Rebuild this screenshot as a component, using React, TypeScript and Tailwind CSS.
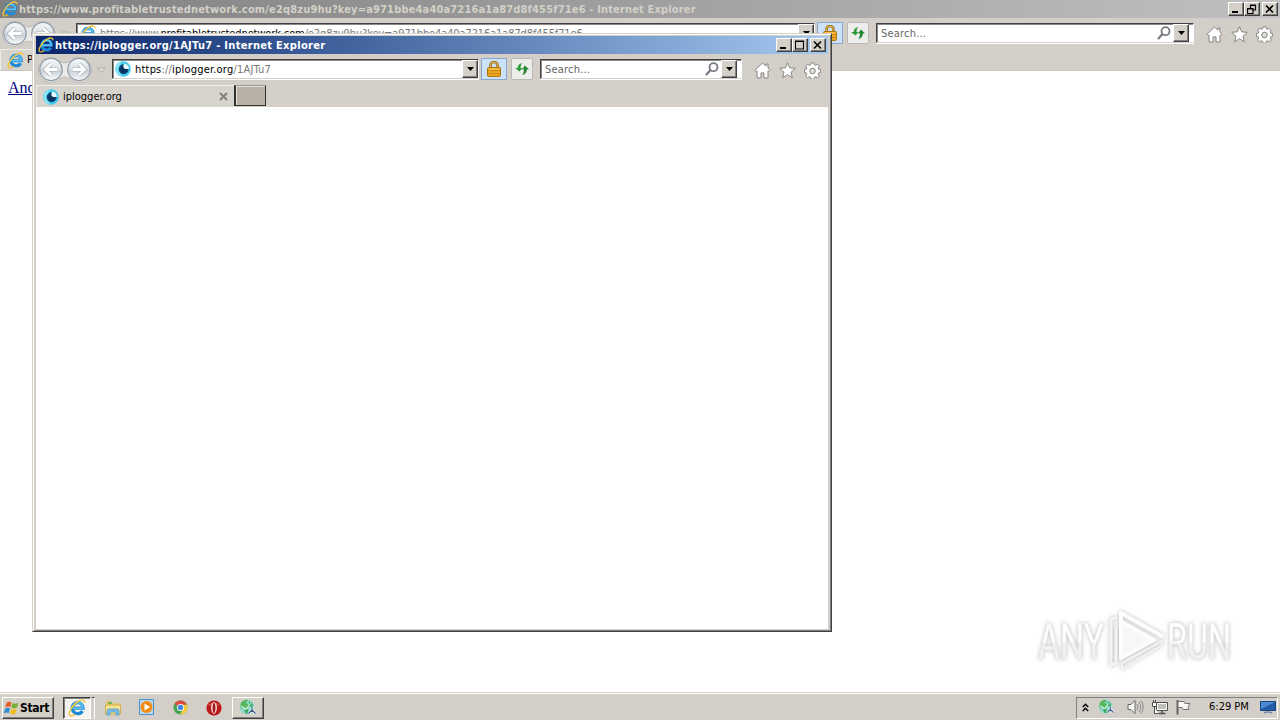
import React from "react";

const ui = "[font-family:'DejaVu_Sans_Condensed','DejaVu_Sans',sans-serif] [font-stretch:condensed]";
const raised =
  "bg-[#d4d0c8] border border-t-white border-l-white border-b-[#404040] border-r-[#404040] shadow-[inset_-1px_-1px_0_#808080]";

function IeLogo({ className = "" }: { className?: string }) {
  return (
    <svg viewBox="0 0 16 16" className={className}>
      <path d="M4.200 8.200H13.400C13.400 5 11.300 3.200 8.600 3.200A4.900 4.900 0 1 0 12.800 10.700" fill="none" stroke="#1c8ad6" strokeWidth="2.900" />
      <path d="M4.200 8.200H13.200C13.200 5 11.300 3.200 8.600 3.200A4.900 4.900 0 0 0 3.800 8" fill="none" stroke="#63c3f4" strokeWidth="1.400" />
      <path d="M1.600 14.600C-.400 12.400 4.600 4.300 9.500 1.900c3-1.500 5.600-1.200 5.500 1.300" fill="none" stroke="#f4c536" strokeWidth="1.300" />
      <path d="M1.600 14.600c1 .8 3 .1 4.600-1.100" fill="none" stroke="#f1bb25" strokeWidth="1.100" />
    </svg>
  );
}

function EyeLogo() {
  return (
    <svg viewBox="0 0 16 16" className="size-4 shrink-0">
      <circle cx="8" cy="8" r="7.800" fill="#42c8ec" />
      <path d="M8 .2a7.800 7.800 0 0 0 0 15.600 10 10 0 0 1 0-15.600z" fill="#86e4f8" />
      <circle cx="8.600" cy="8.300" r="5" fill="#0c4c7e" />
      <circle cx="8.800" cy="8.600" r="3.600" fill="#06345f" />
      <path d="M9 2.500a5.500 5.500 0 0 1 5 5.500h-3.500A2.500 2.500 0 0 1 8.800 4z" fill="#e8fbff" />
    </svg>
  );
}

function NavButtons() {
  return (
    <svg viewBox="0 0 76 30" className="h-[30px] w-[76px] shrink-0">
      <defs>
        <linearGradient id="glass" x1="0" y1="0" x2="0" y2="1">
          <stop offset="0" stopColor="#f8fafb" />
          <stop offset=".45" stopColor="#dde2e6" />
          <stop offset=".55" stopColor="#c7cfd6" />
          <stop offset="1" stopColor="#fafdff" />
        </linearGradient>
      </defs>
      <path d="M15 3.500a12.500 12.500 0 1 0 9 21q5-3 10 0a12.500 12.500 0 1 0 0-17q-5 3-10 0a12.500 12.500 0 0 0-9-4z" fill="#e9e9e8" stroke="#b5b3af" strokeWidth=".8" />
      {[15, 43].map((x) => (
        <circle key={x} cx={x} cy="15.500" r="11.200" fill="url(#glass)" stroke="#8f9ba5" strokeWidth="1.200" />
      ))}
      <g fill="none" stroke="#a4aeb6" strokeWidth="4.200">
        <path d="M21.500 15.500H10M15 10l-5.500 5.500L15 21M36.500 15.500H48M43 10l5.500 5.500L43 21" />
      </g>
      <g fill="none" stroke="#fff" strokeWidth="2.800">
        <path d="M21.500 15.500H10M15 10l-5.500 5.500L15 21M36.500 15.500H48M43 10l5.500 5.500L43 21" />
      </g>
      <path d="M61.500 14h8l-4 4.500z" fill="#e3e0da" stroke="#aaa69f" strokeWidth=".9" />
    </svg>
  );
}

function DropButton() {
  return (
    <span className={`flex h-[18px] w-4 shrink-0 items-center justify-center ${raised}`}>
      <svg viewBox="0 0 7 4" className="h-1 w-[7px]">
        <path d="M0 0h7L3.500 4z" fill="#000" />
      </svg>
    </span>
  );
}

function Lock() {
  return (
    <svg viewBox="0 0 14 16" className="h-4 w-3.5">
      <path d="M3.500 8V4.500a3.500 3.500 0 0 1 7 0V8" fill="none" stroke="#9a721b" strokeWidth="2.600" />
      <path d="M3.500 8V4.500a3.500 3.500 0 0 1 7 0V8" fill="none" stroke="#e0b755" strokeWidth="1" />
      <rect x=".500" y="6.500" width="13" height="9" rx="1" fill="#eea51c" stroke="#ad7310" />
      <path d="M1 9.500h12M1 12.500h12" stroke="#c98b1b" />
      <path d="M2 8h10" stroke="#ffd466" />
    </svg>
  );
}

function Refresh() {
  return (
    <svg viewBox="0 0 14 14" className="size-3.5">
      <path d="M0 6 4.500 9.500 7.500 6H5.500C5.500 4 6 3 7 1 4 1.500 2.800 3.500 2.700 6z" fill="#2d9b3a" />
      <path d="M14 7.500 10 3.500 7 7.500h2c0 2-.500 3.500-1.500 5.500 3-.800 4.200-2.800 4.300-5.500z" fill="#23852f" />
    </svg>
  );
}

const iconLine = { fill: "#fff", stroke: "#858582", strokeWidth: 1 };

function Toolbar({ popup }: { popup: boolean }) {
  return (
    <div className="flex h-[31px] items-start">
      <NavButtons />
      <div className="mt-[5px] flex h-[20px] min-w-0 flex-1 items-center border border-t-[#404040] border-l-[#404040] border-r-white border-b-[#d4d0c8] bg-white pl-[2px] shadow-[inset_1px_1px_0_#8b8984,0_1px_0_#fff]">
        {popup ? <EyeLogo /> : <IeLogo className="size-[17px] shrink-0" />}
        <span className={`ml-1 flex-1 truncate pt-px text-[11px] leading-[18px] ${popup ? "tracking-[0.2px]" : "tracking-[-0.12px]"} text-[#777] ${ui}`}>
          {popup ? (
            <>
              <span className="text-black">https</span>://<span className="text-black">iplogger.org</span>/1AJTu7
            </>
          ) : (
            <>
              https://www.<span className="text-black">profitabletrustednetwork.com</span>/e2q8zu9hu?key=a971bbe4a40a7216a1a87d8f455f71e6
            </>
          )}
        </span>
        <DropButton />
      </div>
      <div className="mt-1 ml-[2px] flex h-[22px] w-[26px] items-center justify-center border border-[#89a8cf] bg-[#cde2f9]">
        <Lock />
      </div>
      <div className="mt-1 ml-1 flex h-[22px] w-[22px] items-center justify-center rounded-[2px] border border-[#b9b8b5] bg-[#edeeeb]">
        <Refresh />
      </div>
      <div className={`mt-[5px] ml-[7px] flex h-[20px] items-center border border-t-[#404040] border-l-[#404040] border-r-white border-b-[#d4d0c8] bg-white pr-1 pl-1 shadow-[inset_1px_1px_0_#8b8984,0_1px_0_#fff] ${popup ? "w-[202px]" : "w-[318px]"}`}>
        <span className={`flex-1 pt-px text-[11px] leading-[18px] text-[#666] ${ui} tracking-[0.2px]`}>Search...</span>
        <svg viewBox="0 0 14 14" className="mr-[2px] size-3.5">
          <circle cx="8.500" cy="5.200" r="4" fill="none" stroke="#777a80" strokeWidth="1.800" />
          <path d="m5.500 8-4.500 5" stroke="#777a80" strokeWidth="2.200" />
        </svg>
        <DropButton />
      </div>
      <div className="mt-2 ml-3 flex w-[74px] gap-2">
        <svg viewBox="0 0 17 17" className="size-[17px] shrink-0">
          <path d="M8.500 1 .8 8.300l1.300 1.300.9-.7v7h4v-5h3v5h4v-7l.9.7 1.300-1.300-2.200-2.100V2h-2v2.200z" {...iconLine} />
        </svg>
        <svg viewBox="0 0 17 17" className="size-[17px] shrink-0">
          <path d="m8.500.8 2.100 5 5.700.5-4.300 3.900 1.300 5.500-4.800-3-4.800 3L5 10.200.700 6.300l5.700-.5z" {...iconLine} />
        </svg>
        <svg viewBox="0 0 17 17" className="size-[17px] shrink-0">
          <path d="M7 .8h3l.4 2 1.200.5 1.800-1.100 1.900 1.900-1.100 1.800.5 1.200 2 .4v3l-2 .4-.5 1.200 1.100 1.800-1.900 1.900-1.800-1.100-1.200.5-.4 2H7l-.4-2-1.200-.5-1.800 1.100-1.900-1.900 1.100-1.800-.5-1.200-1.900-.4v-3l1.900-.4.5-1.200-1.100-1.800 1.900-1.900 1.800 1.100 1.200-.5z" {...iconLine} />
          <circle cx="8.500" cy="9" r="2.800" fill="#dedbd6" stroke="#858582" />
        </svg>
      </div>
    </div>
  );
}

function CaptionButtons({ popup }: { popup: boolean }) {
  const box = `flex h-3.5 w-4 items-center justify-center ${raised}`;
  return (
    <div className="mr-[2px] flex">
      <span className={box}>
        <svg viewBox="0 0 10 10" className="size-2.5"><path d="M1 7h6v2H1z" /></svg>
      </span>
      <span className={box}>
        <svg viewBox="0 0 10 10" className="size-2.5">
          {popup ? (
            <path d="M.500 1h8v8h-8zM.500 1.500h8" fill="none" stroke="#000" strokeWidth="1.100" />
          ) : (
            <path d="M3.500 4V1h5v5H6M3 1.500h6M.500 4.500h5.500v5H.500zM.500 5h6" fill="none" stroke="#000" strokeWidth="1.200" />
          )}
        </svg>
      </span>
      <span className={`ml-[2px] ${box}`}>
        <svg viewBox="0 0 10 10" className="size-2.5"><path d="m1 1.500 7 7m0-7-7 7" stroke="#000" strokeWidth="1.600" /></svg>
      </span>
    </div>
  );
}

function PopupWindow() {
  return (
    <section className="absolute top-[33px] left-8 flex h-[599px] w-[800px] flex-col border border-t-[#d4d0c8] border-l-[#d4d0c8] border-r-[#404040] border-b-[#404040] bg-[#d4cec8] p-[2px] shadow-[inset_1px_1px_0_#fff,inset_-1px_-1px_0_#808080]">
      <div className="flex flex-1 flex-col pr-px pl-px">
        <header className="flex h-[18px] items-center bg-linear-to-r from-[#0a246a] to-[#a6caf0]">
          <IeLogo className="ml-[2px] size-4" />
          <span className={`ml-px flex-1 pt-px text-[11px] leading-[17px] font-bold whitespace-nowrap text-white ${ui} tracking-[0.3px]`}>
            https://iplogger.org/1AJTu7 - Internet Explorer
          </span>
          <CaptionButtons popup />
        </header>
        <Toolbar popup />
        <div className="flex h-[22px] items-start">
          <div className="flex h-[22px] w-[198px] items-center border-t border-l border-[#efede9] bg-[#d7d3cd] pl-1.5">
            <EyeLogo />
            <span className={`ml-1 flex-1 text-[11px] leading-[18px] text-black ${ui}`}>iplogger.org</span>
            <svg viewBox="0 0 9 9" className="mr-1.5 size-[9px]"><path d="m1 1 7 7m0-7-7 7" stroke="#85827d" strokeWidth="2" /></svg>
          </div>
          <div className="h-[21px] w-8 border border-t-[#999] border-l-2 border-r-[#303030] border-b-[#303030] border-l-[#303030] bg-[#b9b1a8] shadow-[inset_1px_1px_0_#e5e0da]" />
        </div>
        <div className="flex-1 bg-white" />
      </div>
    </section>
  );
}

function GlobeShare({ className = "" }: { className?: string }) {
  return (
    <svg viewBox="0 0 18 18" className={className}>
      <circle cx="8" cy="8" r="7.300" fill="#8fd6ca" />
      <path d="M2 4c2-3 5-3.500 7-3l-2 3 3 2-3 4-3-2-1 2C1 8 1 6 2 4z" fill="#55b75a" />
      <path d="m10 2 4 3-1 4-3-2zM5 11l4-1 1 4-3 1z" fill="#3fae68" />
      <path d="m2 7 5 3 5-6" fill="none" stroke="#effff0" />
      <path d="M13 8v5M13 11l-3.500 3.500M13 11l3.500 3.500" stroke="#e9f7ff" strokeWidth="3" />
      <path d="M13 8v5M13 11l-3.500 3.500M13 11l3.500 3.500" stroke="#3c5a80" strokeWidth="1.200" />
    </svg>
  );
}

function Taskbar() {
  return (
    <footer className="flex h-7 items-center border-t border-[#d4d0c8] bg-[#d4cec8] pb-px shadow-[inset_0_1px_0_#fff]">
      <button className={`ml-[2px] mt-[3px] flex h-[22px] w-[52px] items-center pl-px ${raised}`}>
        <svg viewBox="0 0 16 16" className="size-4 shrink-0">
          <path d="M2.500 3q2.500-2 5-.6L6.300 7Q4 6 1.200 7.500z" fill="#e65b2b" />
          <path d="M8.500 3q2.500 1.500 6 0L13 7.500q-3 1.500-5.700 0z" fill="#78ad31" />
          <path d="M1 8.700q2.500-1.600 5-.5l-1.200 4.900q-2.500-1.200-5 .4z" fill="#308bd2" />
          <path d="M7.200 8.700q2.500 1.300 5.600 0l-1.500 5q-3 1.200-5.400-.2z" fill="#efbd22" />
        </svg>
        <span className={`text-[12px] leading-4 font-bold tracking-[-0.3px] text-black ${ui}`}>Start</span>
      </button>
      <div className="mt-[3px] ml-[9px] flex h-[22px] w-[28px] items-center justify-center border border-t-[#404040] border-l-[#404040] border-r-white border-b-white bg-[#f5f3ef] shadow-[inset_1px_1px_0_#808080]">
        <IeLogo className="size-[18px]" />
      </div>
      <span className="mt-[3px] ml-px h-[22px] w-[3px] border-t border-r border-t-[#404040] border-r-white" />
      <svg viewBox="0 0 18 18" className="mt-[3px] ml-[9px] size-[18px]">
        <path d="M2 2h5l1 2h7v4H2z" fill="#e8ca67" />
        <path d="M4 3h4v2H4z" fill="#71b35e" />
        <path d="M1.500 6h15v9h-15z" fill="#f6e392" stroke="#d3ac49" />
        <path d="M3 16v-4q0-2 2-2h8q2 0 2 2v4h-3v-3H6v3z" fill="#79bce4" stroke="#4b98c8" strokeWidth=".7" />
      </svg>
      <svg viewBox="0 0 18 18" className="mt-[2px] ml-[16px] size-[18px]">
        <path d="M1.500 1.500h14v15h-14z" fill="#b9d9f1" stroke="#4c91c9" />
        <circle cx="8.500" cy="9" r="6" fill="#f18b13" />
        <path d="m6.500 5.500 5.500 3.500-5.500 3.500z" fill="#fff" />
      </svg>
      <svg viewBox="0 0 16 16" className="mt-[3px] ml-[17px] size-[15px]">
        <circle cx="8" cy="8" r="7.500" fill="#45a652" />
        <path d="M8 8 1.500 4.200a7.500 7.500 0 0 1 13 0z" fill="#df493c" />
        <path d="M8 5h7a7.500 7.500 0 0 1-7.400 10.500L11 9z" fill="#f7ca3c" />
        <circle cx="8" cy="8" r="3.800" fill="#fff" />
        <circle cx="8" cy="8" r="2.900" fill="#4287e5" />
      </svg>
      <svg viewBox="0 0 16 16" className="mt-[3px] ml-[18px] size-4">
        <ellipse cx="8" cy="8" rx="7.600" ry="7.500" fill="#b91919" />
        <path d="M2 5q6-5 12 0-6 2-12 0z" fill="#d75a52" />
        <ellipse cx="8" cy="8" rx="2.800" ry="5.800" fill="#fff" />
        <ellipse cx="8" cy="8" rx="1.500" ry="5" fill="#a81515" />
      </svg>
      <div className={`mt-[3px] ml-[10px] flex h-[22px] w-8 items-center justify-center ${raised}`}>
        <GlobeShare className="size-[18px]" />
      </div>
      <div className="mt-[3px] mr-[2px] ml-auto flex h-[22px] w-[202px] items-center border border-t-[#808080] border-l-[#808080] border-r-white border-b-white pb-px">
        <svg viewBox="0 0 7 9" className="ml-[5px] h-[9px] w-[7px]"><path d="m.8 4 2.700-2.700L6.200 4M.8 8l2.700-2.700L6.200 8" fill="none" stroke="#000" strokeWidth="1.500" /></svg>
        <GlobeShare className="ml-[9px] size-[17px]" />
        <svg viewBox="0 0 18 16" className="ml-[12px] h-4 w-[18px]">
          <path d="M1 5.500h3l4-4v13l-4-4H1z" fill="#f7f7f5" stroke="#696967" />
          <path d="M10 5q2 3 0 6M12 3q3.500 5 0 10M14 1.500q4.500 6.500 0 13" fill="none" stroke="#8a8a88" />
        </svg>
        <svg viewBox="0 0 18 16" className="ml-[6px] h-4 w-[18px]">
          <path d="M5.500 3.500h11v8h-11z" fill="#bdbdbb" stroke="#50504e" />
          <path d="M6.500 4.500h9v6h-9z" fill="none" stroke="#fff" />
          <path d="M11 12v2M7.500 14.500h7" stroke="#50504e" strokeWidth="1.500" />
          <path d="M1.500 3.500h4v4h-4zM2.500 1v2M4.500 1v2M3.500 8v6.500h4" fill="#f7f7f5" stroke="#50504e" />
        </svg>
        <svg viewBox="0 0 16 16" className="ml-[6px] size-4">
          <path d="M2.500 1v14.500" stroke="#656563" strokeWidth="2" />
          <path d="M3 2.500h6l1 2h5l-2 3 1 3H8l-1-2H3z" fill="#fafaf8" stroke="#747472" />
        </svg>
        <span className={`ml-[18px] text-[11px] leading-4 whitespace-nowrap text-black ${ui}`}>6:29 PM</span>
        <svg viewBox="0 0 16 14" className="mr-px ml-auto h-3.5 w-4">
          <path d="M.500 1.500h15v9H.500z" fill="#235ba9" stroke="#194680" />
          <path d="M1 2h14L1 9z" fill="#4c8bd2" />
          <path d="M4 13q4-2 8 0" fill="none" stroke="#728fab" strokeWidth="1.500" />
        </svg>
      </div>
    </footer>
  );
}

function Watermark() {
  return (
    <svg viewBox="0 0 210 80" className="absolute top-[600px] left-[1030px] h-20 w-[210px] drop-shadow-[0_0_2px_#bbb]">
      <defs>
        <linearGradient id="fade" x1="0" y1="0" x2="0" y2="1">
          <stop offset=".5" stopColor="#fff" />
          <stop offset=".52" stopColor="#f1f1f1" />
        </linearGradient>
      </defs>
      <g className="[font-family:'Liberation_Sans_Narrow','Roboto',sans-serif]" fill="url(#fade)" fontSize="50" stroke="#ececec" strokeWidth=".5">
        <text x="8" y="59" textLength="66" lengthAdjust="spacingAndGlyphs">ANY</text>
        <text x="137" y="59" textLength="64" lengthAdjust="spacingAndGlyphs">RUN</text>
      </g>
      <path d="M92 22v36l32-18z" fill="#f7f7f7" />
      <g fill="none" stroke="#fdfdfd" strokeWidth="4" strokeLinejoin="round" strokeLinecap="round">
        <path d="M81 65V19l5-1M81 65l5-2V28" strokeWidth="3" stroke="#f4f4f4" />
        <path d="M91 58V13l41 23M91 58l33-18-32-18" />
        <path d="M132 41 92 63v6l40-24z" stroke="#f2f2f2" strokeWidth="2" />
      </g>
    </svg>
  );
}

export default function App() {
  return (
    <main className="relative flex h-[720px] w-[1280px] flex-col overflow-hidden bg-white">
      <section className="flex flex-1 flex-col">
        <div className="bg-[#d4cec8]">
          <header className="flex h-[18px] items-center bg-linear-to-r from-[#808080] to-[#c0c0c0]">
            <IeLogo className="ml-[2px] size-4" />
            <span className={`ml-px flex-1 pt-px text-[11px] leading-[17px] font-bold whitespace-nowrap text-[#d4d0c8] ${ui} tracking-[0.16px]`}>
              https://www.profitabletrustednetwork.com/e2q8zu9hu?key=a971bbe4a40a7216a1a87d8f455f71e6 - Internet Explorer
            </span>
            <CaptionButtons popup={false} />
          </header>
          <Toolbar popup={false} />
          <div className="flex h-[22px] border-b border-[#cbc5be]">
            <div className="flex w-[198px] items-center border-t border-l border-[#efede9] bg-[#d7d3cd] pl-1.5">
              <IeLogo className="size-[17px] shrink-0" />
              <span className={`ml-[3px] text-[11px] leading-[18px] text-black ${ui}`}>P</span>
            </div>
          </div>
        </div>
        <div className="flex-1 px-2 pt-1">
          <a className="font-['Liberation_Serif',serif] text-[16px] leading-[18px] text-[#000080] underline">Ano</a>
        </div>
      </section>
      <Taskbar />
      <Watermark />
      <PopupWindow />
    </main>
  );
}
